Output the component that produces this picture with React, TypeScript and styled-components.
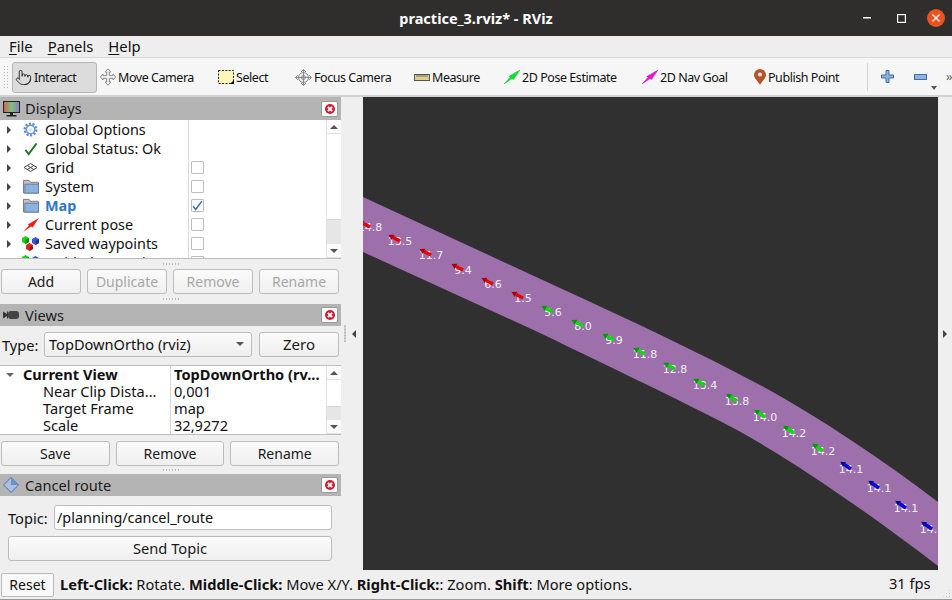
import React from "react";
import styled, { createGlobalStyle } from "styled-components";
import { Pointer } from "lucide-react";

const Global = createGlobalStyle`
  html, body { margin: 0; padding: 0; background: #efefef; }
  body { font-family: "Noto Sans", "Open Sans", sans-serif; font-size: 14px; color: #111; }
  * { box-sizing: border-box; }
`;

const Win = styled.div`
  width: 952px; height: 600px; display: flex; flex-direction: column; overflow: hidden; background: #efefef;
  border-bottom: 1px solid #9a9a9a;
`;
const TitleBar = styled.header`
  height: 36px; flex: none; background: #302d2d; color: #fff; display: grid; grid-template-columns: 1fr auto 1fr; align-items: center;
`;
const Title = styled.div`
  grid-column: 2; font-weight: 700; font-size: 14.5px; padding-bottom: 1px;
`;
const WinControls = styled.div`
  grid-column: 3; justify-self: end; display: flex; align-items: center; gap: 26px; padding-right: 7px;
  & svg:last-child { margin-left: -5px; }
`;
const MenuBar = styled.nav`
  height: 21px; flex: none; display: flex; align-items: center; padding: 0 0 0 9px; gap: 15px; background: #eeeeee; font-size: 14.8px;
  border-bottom: 1px solid #d8d8d8; box-sizing: content-box;
`;
const MenuItem = styled.span`
  line-height: 21px;
  & u { text-underline-offset: 2px; text-decoration-thickness: 1px; }
`;
const ToolBar = styled.div`
  height: 39px; flex: none; display: flex; align-items: center; padding-left: 2px; background: #f6f6f6; border-bottom: 2px solid #d0d0d0; position: relative;
`;
const Handle = styled.div`
  width: 5px; height: 24px; margin: 0 4px 0 1px; background-image: radial-gradient(#b8b8b8 0.7px, transparent 0.8px); background-size: 3px 3px;
`;
const Tool = styled.div<{ $w: number; $active?: boolean }>`
  width: ${(p) => p.$w}px; height: 31px; flex: none; display: flex; align-items: center; gap: 2px; padding-left: 2px; font-size: 12.5px; letter-spacing: -0.45px; margin-top: 1px; white-space: nowrap;
  border-radius: 3px; border: 1px solid ${(p) => (p.$active ? "#b5b5b5" : "transparent")}; background: ${(p) => (p.$active ? "#dcdcdc" : "transparent")};
  & svg { flex: none; }
`;
const ToolSep = styled.div`
  width: 1px; height: 28px; background: #d4d4d4; margin: 0 13px 0 3px;
`;
const IconTool = styled.div`
  width: 33px; height: 31px; display: flex; align-items: center; padding-left: 0; flex: none; position: relative;
`;
const MenuCaret = styled.span`
  position: absolute; left: 17px; bottom: 2px; width: 0; height: 0; border-left: 3px solid transparent; border-right: 3px solid transparent; border-top: 4px solid #555;
`;
const More = styled.span`
  font-size: 12px; color: #555; margin-left: -1px; letter-spacing: -1px;
`;
const Main = styled.main`
  flex: 1; display: flex; min-height: 0;
`;
const Side = styled.aside`
  width: 341px; flex: none; display: flex; flex-direction: column;
`;
const DockHead = styled.div<{ $h: number }>`
  height: ${(p) => p.$h}px; flex: none; background: #b4b4b4; display: flex; align-items: center; padding: 0 3px; gap: 5px; font-size: 14.6px; color: #1c1c1c;
`;
const HeadLabel = styled.span<{ $up?: boolean }>`
  flex: 1; margin-top: ${(p) => (p.$up ? -2 : 0)}px;
`;
const CloseBtn = styled.div`
  width: 17px; height: 16px; background: #fdfdfd; border: 1px solid #999; border-radius: 2px; display: flex; align-items: center; justify-content: center;
`;
const CloseDot = styled.div`
  width: 10px; height: 10px; border-radius: 50%; background: #cc1f33; position: relative;
  &::before { content: ""; position: absolute; left: 2px; top: 4px; width: 6px; height: 2px; background: #fff; transform: rotate(45deg); }
  &::after { content: ""; position: absolute; left: 2px; top: 4px; width: 6px; height: 2px; background: #fff; transform: rotate(-45deg); }
`;
const Tree = styled.div`
  height: 139px; flex: none; background: #fff; border-bottom: 1px solid #bdbdbd; display: flex; position: relative; overflow: hidden;
`;
const TreeBody = styled.div`
  flex: 1; overflow: hidden; position: relative;
`;
const TreeRow = styled.div`
  height: 19px; line-height: 18px; display: grid; grid-template-columns: 9px 27px 147px 1fr; align-items: center; padding-left: 5px; font-size: 14.4px; white-space: nowrap;
`;
const Caret = styled.span`
  width: 0; height: 0; border-top: 4px solid transparent; border-bottom: 4px solid transparent; border-left: 4px solid #444; margin-left: 2px;
`;
const RowIcon = styled.span`
  display: flex; justify-content: center; padding-left: 6px;
`;
const RowName = styled.span<{ $blue?: boolean }>`
  padding-left: 4px; color: ${(p) => (p.$blue ? "#2f78c4" : "#111")}; font-weight: ${(p) => (p.$blue ? 700 : 400)};
`;
const Check = styled.span`
  width: 13px; height: 13px; border: 1px solid #bdbdbd; border-radius: 1px; background: #fff; margin-left: 3px; display: flex; align-items: center; justify-content: center;
`;
const ColLine = styled.div<{ $x: number }>`
  position: absolute; left: ${(p) => p.$x}px; top: 0; bottom: 0; width: 1px; background: #d9d9d9;
`;
const ScrollBar = styled.div`
  width: 15px; flex: none; background: #fff; border-left: 1px solid #e2e2e2; display: flex; flex-direction: column;
`;
const ScrollBtn = styled.div`
  height: 14px; flex: none; background: #fbfbfb; display: flex; align-items: center; justify-content: center; border-bottom: 1px solid #e2e2e2;
`;
const ScrollUp = styled.span`
  width: 0; height: 0; border-left: 4px solid transparent; border-right: 4px solid transparent; border-bottom: 4px solid #555;
`;
const ScrollDown = styled.span`
  width: 0; height: 0; border-left: 4px solid transparent; border-right: 4px solid transparent; border-top: 4px solid #555;
`;
const ScrollTrack = styled.div`
  flex: 1;
`;
const ScrollThumb = styled.div<{ $h: number }>`
  height: ${(p) => p.$h}px; flex: none; background: #e6e6e6; border-top: 1px solid #d6d6d6;
`;
const Dots = styled.div<{ $h: number }>`
  height: ${(p) => p.$h}px; flex: none; display: flex; align-items: center; justify-content: center;
  &::before { content: ""; width: 17px; height: 2px; background-image: radial-gradient(#bdbdbd 0.8px, transparent 0.9px); background-size: 3px 2px; }
`;
const BtnRow = styled.div<{ $top: number }>`
  display: flex; flex: none; gap: 6px; padding: ${(p) => p.$top}px 2px 0 1px;
`;
const Btn = styled.div<{ $off?: boolean }>`
  flex: 1; height: 25px; border: 1px solid #bcbcbc; border-radius: 3px; background: linear-gradient(#fbfbfb, #efefef);
  display: flex; align-items: center; justify-content: center; font-size: 14px; color: ${(p) => (p.$off ? "#a8a8a8" : "#1a1a1a")};
`;
const SendBtn = styled(Btn)`
  font-size: 14.7px; padding-bottom: 2px;
`;
const TypeRow = styled.div`
  height: 39px; flex: none; display: flex; align-items: center; padding: 0 2px 2px 2px; font-size: 14.6px; gap: 5px;
`;
const FieldLabel = styled.span<{ $w: number }>`
  width: ${(p) => p.$w}px; flex: none; font-size: 14.6px;
`;
const Combo = styled.div`
  width: 208px; flex: none; height: 25px; border: 1px solid #bcbcbc; border-radius: 3px; background: linear-gradient(#fbfbfb, #efefef); display: flex; align-items: center; justify-content: space-between; padding: 0 7px 2px 4px;
`;
const ZeroBtn = styled(Btn)`
  flex: none; width: 80px; margin-left: 2px; font-size: 15px; padding-bottom: 2px;
`;
const PropTable = styled.div`
  height: 70px; flex: none; background: #fff; border-top: 1px solid #bdbdbd; border-bottom: 1px solid #bdbdbd; position: relative; display: flex; overflow: hidden;
`;
const PropRow = styled.div<{ $bold?: boolean }>`
  height: 17px; line-height: 17px; display: grid; grid-template-columns: 171px 1fr; align-items: center; font-size: 14.6px; font-weight: ${(p) => (p.$bold ? 700 : 400)}; white-space: nowrap;
`;
const PropName = styled.span<{ $indent: number }>`
  padding-left: ${(p) => p.$indent}px; display: flex; align-items: center;
`;
const PropValue = styled.span`
  padding-left: 3px;
`;
const DownCaret = styled.span`
  width: 0; height: 0; border-left: 4px solid transparent; border-right: 4px solid transparent; border-top: 4px solid #666; margin: 0 9px 0 6px;
`;
const TopicRow = styled.div`
  display: flex; flex: none; align-items: center; gap: 5px; padding: 9px 9px 0 8px; font-size: 14.4px;
`;
const TopicInput = styled.div`
  flex: 1; height: 25px; background: #fff; border: 1px solid #bcbcbc; border-radius: 3px; padding-left: 2px; display: flex; align-items: center;
`;
const SendRow = styled.div`
  padding: 6px 9px 0 8px; flex: none; display: flex;
`;
const Splitter = styled.div`
  width: 22px; flex: none; display: flex; align-items: center; padding-left: 3px; gap: 6px;
`;
const SplitDots = styled.span`
  width: 2px; height: 17px; background-image: radial-gradient(#bdbdbd 0.8px, transparent 0.9px); background-size: 2px 3px;
`;
const LeftArrow = styled.span`
  width: 0; height: 0; border-top: 4px solid transparent; border-bottom: 4px solid transparent; border-right: 4px solid #444;
`;
const RightArrow = styled.span`
  width: 0; height: 0; border-top: 4px solid transparent; border-bottom: 4px solid transparent; border-left: 4px solid #444;
`;
const View = styled.section`
  width: 575px; flex: none; background: #303030; overflow: hidden;
  & svg { display: block; }
`;
const RightStrip = styled.div`
  flex: 1; display: flex; align-items: center; padding-left: 5px;
`;
const StatusBar = styled.footer`
  height: 29px; flex: none; display: flex; align-items: center; padding-left: 1px; font-size: 14.65px; position: relative;
`;
const ResetBtn = styled.div`
  width: 53px; height: 24px; border: 1px solid #bcbcbc; border-radius: 2px; background: #f8f8f8; display: flex; align-items: center; justify-content: center; margin-right: 6px; font-size: 14px;
`;
const StatusText = styled.div`
  flex: 1; white-space: nowrap; padding-bottom: 1px;
`;
const Fps = styled.div`
  width: 63px; flex: none; padding-bottom: 4px;
`;
const Grip = styled.span`
  position: absolute; right: 1px; bottom: 1px; width: 9px; height: 9px; background-image: radial-gradient(#bbb 0.8px, transparent 0.9px); background-size: 3px 3px;
  clip-path: polygon(100% 0, 100% 100%, 0 100%);
`;

const MoveIcon = () => (
  <svg width="16" height="18" viewBox="0 0 16 18" fill="#f4f4f4" stroke="#8a8a8a" strokeWidth="1">
    <path d="M8 .8 11 4H9.3v3.6H13V6l2.6 3L13 12v-1.6H9.3V14H11l-3 3.2L5 14h1.7v-3.6H3V12L.4 9 3 6v1.6h3.7V4H5Z" />
  </svg>
);
const SelectIcon = () => (
  <svg width="16" height="14" viewBox="0 0 16 14">
    <rect x=".5" y=".5" width="15" height="13" fill="#fdf6b8" stroke="#222" strokeDasharray="2 1.4" />
    <path d="M12 14h4v-4z" fill="#111" />
  </svg>
);
const FocusIcon = () => (
  <svg width="17" height="17" viewBox="0 0 17 17" fill="none" stroke="#8c8c8c">
    <circle cx="8.5" cy="8.5" r="5" fill="#eeeeee" />
    <path d="M8.5.5v16M.5 8.5h16M6 3l2.5-2.5L11 3M6 14l2.5 2.5L11 14M3 6 .5 8.5 3 11M14 6l2.5 2.5L14 11" />
    <circle cx="8.5" cy="8.5" r="2" />
  </svg>
);
const RulerIcon = () => (
  <svg width="16" height="7" viewBox="0 0 16 7">
    <rect x=".5" y=".5" width="15" height="6" fill="#e0d18e" stroke="#555" />
    <path d="M3 1v2M5 1v2M7 1v2M9 1v2M11 1v2M13 1v2" stroke="#555" strokeWidth=".8" />
  </svg>
);
const PoseIcon = ({ c, d }: { c: string; d: string }) => (
  <svg width="16" height="14" viewBox="0 0 16 14">
    <path d="M0 14 6 7.6 4.8 6.4 16 0 9.6 9.6 8.2 8.6Z" fill={c} stroke={d} strokeWidth=".4" />
  </svg>
);
const PinIcon = () => (
  <svg width="12" height="16" viewBox="0 0 12 16">
    <path d="M6 0a6 6 0 0 1 6 6c0 3.5-4 6-6 10C4 12 0 9.5 0 6a6 6 0 0 1 6-6Z" fill="#b5532c" />
    <circle cx="6" cy="5.5" r="2.1" fill="#f3ddc9" />
  </svg>
);
const PlusIcon = () => (
  <svg width="13" height="13" viewBox="0 0 13 13">
    <path d="M5 .5h3V5h4.500v3H8v4.500H5V8H.5V5H5Z" fill="#8fb2dc" stroke="#3f6fa8" />
  </svg>
);
const MinusIcon = () => (
  <svg width="13" height="6" viewBox="0 0 13 6">
    <rect x=".5" y=".5" width="12" height="5" fill="#8fb2dc" stroke="#3f6fa8" />
  </svg>
);
const MonitorIcon = () => (
  <svg width="17" height="16" viewBox="0 0 17 16">
    <defs>
      <linearGradient id="scr" x1="0" x2="1" y1="0" y2="0">
        <stop offset="0" stopColor="#d0605c" />
        <stop offset=".5" stopColor="#7ec27a" />
        <stop offset="1" stopColor="#8a7ac8" />
      </linearGradient>
    </defs>
    <rect x=".5" y=".5" width="16" height="11" fill="url(#scr)" stroke="#222" />
    <path d="M7 12h3v2H7zM3.5 14h10v1.5h-10z" fill="#222" />
  </svg>
);
const CameraIcon = () => (
  <svg width="17" height="10" viewBox="0 0 17 10">
    <path d="M0 1.5 4 4V1.5h1V8.5H4V6L0 8.5Z" fill="#333" />
    <rect x="5" y="1" width="11" height="8" rx="3" fill="#444" />
  </svg>
);
const DiamondIcon = () => (
  <svg width="17" height="16" viewBox="0 0 17 16">
    <path d="M8 .5 15.500 8 8 15.500.5 8Z" fill="#a9bfe3" stroke="#4d6ea8" />
    <path d="M8 .5 15.500 8H8Z" fill="#6f8fc9" />
  </svg>
);
const GearIcon = () => (
  <svg width="15" height="15" viewBox="0 0 16 16" fill="none">
    <circle cx="8" cy="8" r="6" stroke="#5f8fd0" strokeWidth="3" strokeDasharray="2.2 1.5" />
    <circle cx="8" cy="8" r="4.5" stroke="#6d9ad6" strokeWidth="1.5" />
    <circle cx="8" cy="8" r="2" fill="#dbe7f6" />
  </svg>
);
const TickIcon = ({ c = "#1f7a2a", s = 14 }: { c?: string; s?: number }) => (
  <svg width={s} height={s} viewBox="0 0 15 15">
    <path d="M1.5 8.5 5 13 13.5 1.5" fill="none" stroke={c} strokeWidth="2" />
  </svg>
);
const GridIcon = () => (
  <svg width="15" height="9" viewBox="0 0 15 9" fill="#fff" stroke="#444">
    <path d="M7.5.5 14 4.5 7.5 8.5 1 4.5Z" />
    <path d="M4.2 2.5 10.8 6.5M10.8 2.5 4.2 6.5" />
  </svg>
);
const FolderIcon = () => (
  <svg width="16" height="15" viewBox="0 0 17 16">
    <path d="M.5 15V1.5h6l1.5 2h8.5V15Z" fill="#c2c2c2" stroke="#777" />
    <rect x="2" y="5.5" width="14.5" height="9.5" fill="#8db2dd" stroke="#5c7fa8" />
  </svg>
);
const RedArrowIcon = () => (
  <svg width="16" height="14" viewBox="0 0 16 14">
    <path d="M0 14 6 7.6 4.8 6.4 16 0 9.6 9.6 8.2 8.6Z" fill="#e8201a" />
  </svg>
);
const Cube = ({ x, y, c, d }: { x: number; y: number; c: string; d: string }) => (
  <g transform={`translate(${x} ${y})`}>
    <path d="M3.5 0 7 2v4L3.5 8 0 6V2Z" fill={c} />
    <path d="M3.5 4 7 2v4L3.5 8Z" fill={d} />
  </g>
);
const CubesIcon = () => (
  <svg width="17" height="16" viewBox="0 0 17 16">
    <Cube x={0} y={0} c="#18d418" d="#0a8f0a" />
    <Cube x={10} y={1} c="#3c55d8" d="#22339a" />
    <Cube x={4} y={7} c="#e02424" d="#9a1414" />
  </svg>
);

type Mark = { t: string; x: number; y: number };
const marks: { c: string; h: string; items: Mark[] }[] = [
  {
    c: "#e80000",
    h: "#a80000",
    items: [
      { t: "14.8", x: 370, y: 227 },
      { t: "13.5", x: 400, y: 241 },
      { t: "11.7", x: 431, y: 255 },
      { t: "9.4", x: 463, y: 270 },
      { t: "6.6", x: 493, y: 284 },
      { t: "1.5", x: 523, y: 298 },
    ],
  },
  {
    c: "#00e000",
    h: "#009800",
    items: [
      { t: "5.6", x: 553, y: 312 },
      { t: "8.0", x: 583, y: 326 },
      { t: "9.9", x: 614, y: 340 },
      { t: "11.8", x: 645, y: 354 },
      { t: "12.8", x: 675, y: 369 },
      { t: "13.4", x: 705, y: 385 },
      { t: "13.8", x: 737, y: 401 },
      { t: "14.0", x: 765, y: 417 },
      { t: "14.2", x: 794, y: 433 },
      { t: "14.2", x: 823, y: 451 },
    ],
  },
  {
    c: "#0000e0",
    h: "#00009c",
    items: [
      { t: "14.1", x: 851, y: 469 },
      { t: "14.1", x: 879, y: 488 },
      { t: "14.1", x: 906, y: 508 },
      { t: "14.1", x: 932, y: 529 },
    ],
  },
];

const Scene = () => (
  <svg width="575" height="473" viewBox="363 97 575 473">
    <path
      d="M363 197 L560 288 C630 320 700 353 760 385 C820 418 880 458 938 502 L938 566 C870 514 800 465 737 430 C680 400 610 367 540 333 L363 252 Z"
      fill="#9d6fab"
    />
    {marks.map((g) =>
      g.items.map((m) => {
        const a = Math.atan2(m.y > 400 ? 0.68 : 0.52, 1);
        const dx = Math.cos(a) * 13;
        const dy = Math.sin(a) * 13;
        const hx = m.x - dx * 0.6;
        const hy = m.y - dy * 0.6;
        return (
          <g key={m.t + m.x}>
            <text
              x={m.x}
              y={m.y + 4}
              textAnchor="middle"
              fontFamily="DejaVu Sans, sans-serif"
              fontSize="11"
              fill="#f4eef6"
            >
              {m.t}
            </text>
            <line x1={hx} y1={hy} x2={m.x} y2={m.y} stroke={g.c} strokeWidth="3.4" />
            <path
              d={`M${m.x - dx} ${m.y - dy} L${hx - dy * 0.22} ${hy + dx * 0.22} L${hx + dy * 0.22} ${hy - dx * 0.22} Z`}
              fill={g.h}
            />
          </g>
        );
      })
    )}
  </svg>
);

const rows: { name: string; icon: React.ReactNode; check?: boolean; on?: boolean; blue?: boolean }[] = [
  { name: "Global Options", icon: <GearIcon /> },
  { name: "Global Status: Ok", icon: <TickIcon /> },
  { name: "Grid", icon: <GridIcon />, check: true },
  { name: "System", icon: <FolderIcon />, check: true },
  { name: "Map", icon: <FolderIcon />, check: true, on: true, blue: true },
  { name: "Current pose", icon: <RedArrowIcon />, check: true },
  { name: "Saved waypoints", icon: <CubesIcon />, check: true },
  { name: "Guided waypoints", icon: <CubesIcon />, check: true },
];

const Close = () => (
  <CloseBtn>
    <CloseDot />
  </CloseBtn>
);

export default function App() {
  return (
    <Win>
      <Global />
      <TitleBar>
        <Title>practice_3.rviz* - RViz</Title>
        <WinControls>
          <svg width="8" height="2" viewBox="0 0 8 2">
            <rect width="8" height="1.5" fill="#fff" />
          </svg>
          <svg width="9" height="9" viewBox="0 0 9 9">
            <rect x=".6" y=".6" width="7.8" height="7.8" fill="none" stroke="#fff" strokeWidth="1.2" />
          </svg>
          <svg width="18" height="18" viewBox="0 0 18 18">
            <circle cx="9" cy="9" r="9" fill="#e95420" />
            <path d="M5.5 5.5l7 7M12.5 5.5l-7 7" stroke="#fff" strokeWidth="1.3" />
          </svg>
        </WinControls>
      </TitleBar>
      <MenuBar>
        <MenuItem>
          <u>F</u>ile
        </MenuItem>
        <MenuItem>
          <u>P</u>anels
        </MenuItem>
        <MenuItem>
          <u>H</u>elp
        </MenuItem>
      </MenuBar>
      <ToolBar>
        <Handle />
        <Tool $w={85} $active>
          <Pointer size={17} strokeWidth={1.3} color="#222" />
          Interact
        </Tool>
        <Tool $w={118}>
          <MoveIcon />
          Move Camera
        </Tool>
        <Tool $w={77}>
          <SelectIcon />
          Select
        </Tool>
        <Tool $w={119}>
          <FocusIcon />
          Focus Camera
        </Tool>
        <Tool $w={90}>
          <RulerIcon />
          Measure
        </Tool>
        <Tool $w={138}>
          <PoseIcon c="#10e030" d="#0a9a20" />
          2D Pose Estimate
        </Tool>
        <Tool $w={112}>
          <PoseIcon c="#f010e0" d="#a00a98" />
          2D Nav Goal
        </Tool>
        <Tool $w={113}>
          <PinIcon />
          Publish Point
        </Tool>
        <ToolSep />
        <IconTool>
          <PlusIcon />
        </IconTool>
        <IconTool>
          <MinusIcon />
          <MenuCaret />
        </IconTool>
        <More>››</More>
      </ToolBar>
      <Main>
        <Side>
          <DockHead $h={23}>
            <MonitorIcon />
            <HeadLabel $up>Displays</HeadLabel>
            <Close />
          </DockHead>
          <Tree>
            <TreeBody>
              {rows.map((r) => (
                <TreeRow key={r.name}>
                  <Caret />
                  <RowIcon>{r.icon}</RowIcon>
                  <RowName $blue={r.blue}>{r.name}</RowName>
                  {r.check ? <Check>{r.on ? <TickIcon c="#2f6fb5" s={11} /> : null}</Check> : <span />}
                </TreeRow>
              ))}
              <ColLine $x={188} />
            </TreeBody>
            <ScrollBar>
              <ScrollBtn>
                <ScrollUp />
              </ScrollBtn>
              <ScrollTrack />
              <ScrollThumb $h={25} />
              <ScrollBtn>
                <ScrollDown />
              </ScrollBtn>
            </ScrollBar>
          </Tree>
          <Dots $h={10} />
          <BtnRow $top={0}>
            <Btn>Add</Btn>
            <Btn $off>Duplicate</Btn>
            <Btn $off>Remove</Btn>
            <Btn $off>Rename</Btn>
          </BtnRow>
          <Dots $h={10} />
          <DockHead $h={22}>
            <CameraIcon />
            <HeadLabel>Views</HeadLabel>
            <Close />
          </DockHead>
          <TypeRow>
            <FieldLabel $w={37}>Type:</FieldLabel>
            <Combo>
              TopDownOrtho (rviz)
              <ScrollDown />
            </Combo>
            <ZeroBtn>Zero</ZeroBtn>
          </TypeRow>
          <PropTable>
            <TreeBody>
              <PropRow $bold>
                <PropName $indent={0}>
                  <DownCaret />
                  Current View
                </PropName>
                <PropValue>TopDownOrtho (rv...</PropValue>
              </PropRow>
              <PropRow>
                <PropName $indent={43}>Near Clip Dista...</PropName>
                <PropValue>0,001</PropValue>
              </PropRow>
              <PropRow>
                <PropName $indent={43}>Target Frame</PropName>
                <PropValue>map</PropValue>
              </PropRow>
              <PropRow>
                <PropName $indent={43}>Scale</PropName>
                <PropValue>32,9272</PropValue>
              </PropRow>
              <ColLine $x={170} />
            </TreeBody>
            <ScrollBar>
              <ScrollBtn>
                <ScrollUp />
              </ScrollBtn>
              <ScrollTrack />
              <ScrollThumb $h={14} />
              <ScrollBtn>
                <ScrollDown />
              </ScrollBtn>
            </ScrollBar>
          </PropTable>
          <BtnRow $top={6}>
            <Btn>Save</Btn>
            <Btn>Remove</Btn>
            <Btn>Rename</Btn>
          </BtnRow>
          <Dots $h={8} />
          <DockHead $h={22}>
            <DiamondIcon />
            <HeadLabel>Cancel route</HeadLabel>
            <Close />
          </DockHead>
          <TopicRow>
            <FieldLabel $w={41}>Topic:</FieldLabel>
            <TopicInput>/planning/cancel_route</TopicInput>
          </TopicRow>
          <SendRow>
            <SendBtn>Send Topic</SendBtn>
          </SendRow>
        </Side>
        <Splitter>
          <SplitDots />
          <LeftArrow />
        </Splitter>
        <View>
          <Scene />
        </View>
        <RightStrip>
          <RightArrow />
        </RightStrip>
      </Main>
      <StatusBar>
        <ResetBtn>Reset</ResetBtn>
        <StatusText>
          <b>Left-Click:</b> Rotate. <b>Middle-Click:</b> Move X/Y. <b>Right-Click:</b>: Zoom. <b>Shift</b>: More options.
        </StatusText>
        <Fps>31 fps</Fps>
        <Grip />
      </StatusBar>
    </Win>
  );
}
